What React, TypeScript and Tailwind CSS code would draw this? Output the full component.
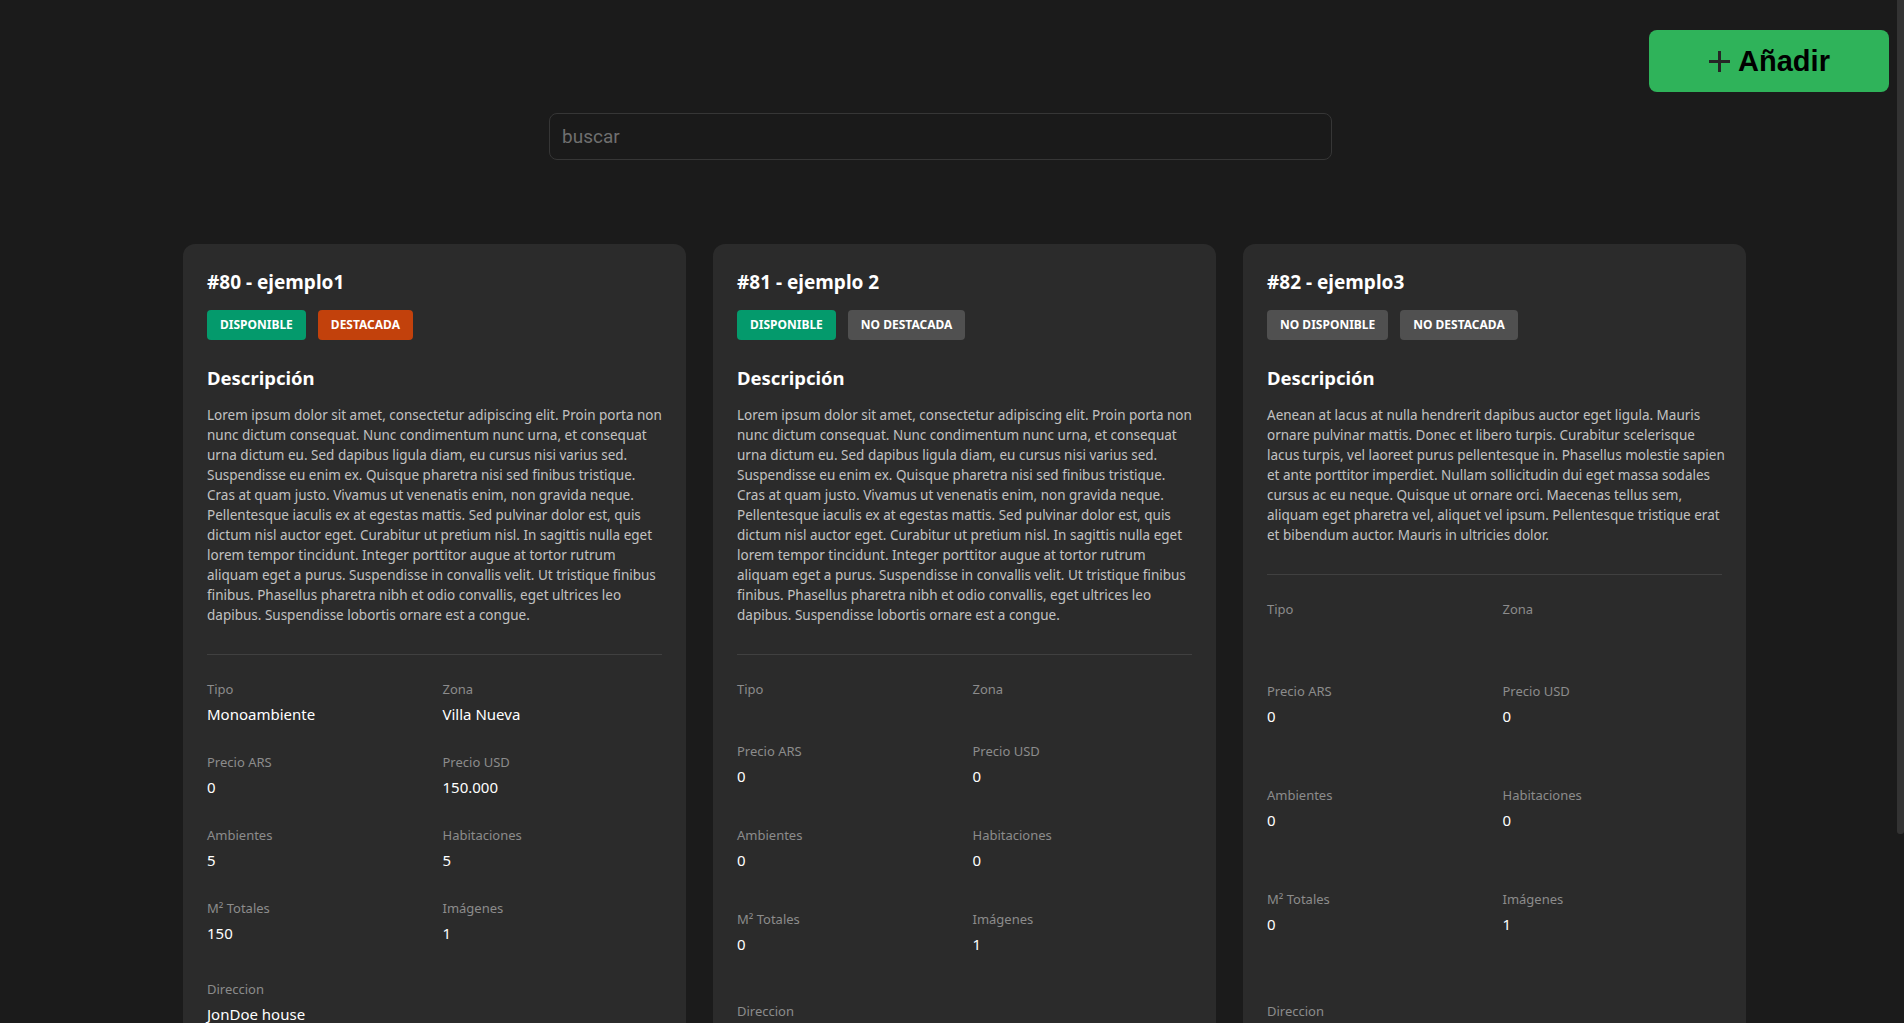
import React from "react";

type Field = { label: string; value: string };

type Propiedad = {
    id: number;
    nombre: string;
    disponible: boolean;
    destacada: boolean;
    descripcion: string[];
    campos: Field[];
    direccion: string;
};

const loremA = [
    "Lorem ipsum dolor sit amet, consectetur adipiscing elit. Proin porta non",
    "nunc dictum consequat. Nunc condimentum nunc urna, et consequat",
    "urna dictum eu. Sed dapibus ligula diam, eu cursus nisi varius sed.",
    "Suspendisse eu enim ex. Quisque pharetra nisi sed finibus tristique.",
    "Cras at quam justo. Vivamus ut venenatis enim, non gravida neque.",
    "Pellentesque iaculis ex at egestas mattis. Sed pulvinar dolor est, quis",
    "dictum nisl auctor eget. Curabitur ut pretium nisl. In sagittis nulla eget",
    "lorem tempor tincidunt. Integer porttitor augue at tortor rutrum",
    "aliquam eget a purus. Suspendisse in convallis velit. Ut tristique finibus",
    "finibus. Phasellus pharetra nibh et odio convallis, eget ultrices leo",
    "dapibus. Suspendisse lobortis ornare est a congue.",
];

const loremB = [
    "Aenean at lacus at nulla hendrerit dapibus auctor eget ligula. Mauris",
    "ornare pulvinar mattis. Donec et libero turpis. Curabitur scelerisque",
    "lacus turpis, vel laoreet purus pellentesque in. Phasellus molestie sapien",
    "et ante porttitor imperdiet. Nullam sollicitudin dui eget massa sodales",
    "cursus ac eu neque. Quisque ut ornare orci. Maecenas tellus sem,",
    "aliquam eget pharetra vel, aliquet vel ipsum. Pellentesque tristique erat",
    "et bibendum auctor. Mauris in ultricies dolor.",
];

const campos = (tipo: string, zona: string, ars: string, usd: string, amb: string, hab: string, m2: string, img: string): Field[] => [
    { label: "Tipo", value: tipo },
    { label: "Zona", value: zona },
    { label: "Precio ARS", value: ars },
    { label: "Precio USD", value: usd },
    { label: "Ambientes", value: amb },
    { label: "Habitaciones", value: hab },
    { label: "M² Totales", value: m2 },
    { label: "Imágenes", value: img },
];

const propiedades: Propiedad[] = [
    {
        id: 80,
        nombre: "ejemplo1",
        disponible: true,
        destacada: true,
        descripcion: loremA,
        campos: campos("Monoambiente", "Villa Nueva", "0", "150.000", "5", "5", "150", "1"),
        direccion: "JonDoe house",
    },
    {
        id: 81,
        nombre: "ejemplo 2",
        disponible: true,
        destacada: false,
        descripcion: loremA,
        campos: campos("", "", "0", "0", "0", "0", "0", "1"),
        direccion: "",
    },
    {
        id: 82,
        nombre: "ejemplo3",
        disponible: false,
        destacada: false,
        descripcion: loremB,
        campos: campos("", "", "0", "0", "0", "0", "0", "1"),
        direccion: "",
    },
];

function Badge({ children, color }: { children: React.ReactNode; color: "green" | "orange" | "gray" }) {
    const bg = color === "green" ? "bg-[#049a6c]" : color === "orange" ? "bg-[#c2410c]" : "bg-[#505050]";
    return (
        <span className={`${bg} h-[30px] px-[13px] rounded-[4px] flex items-center text-[12px] font-bold text-white uppercase`}>
            {children}
        </span>
    );
}

function Dato({ label, value }: Field) {
    return (
        <div>
            <div className="text-[13px] leading-5 text-[#8c8c8c]">{label}</div>
            <div className="mt-[4px] text-[15px] leading-[22px] text-white">{value}</div>
        </div>
    );
}

function Card({ p }: { p: Propiedad }) {
    return (
        <div className="bg-[#2b2b2b] rounded-xl p-6 flex flex-col">
            <h2 className="text-[19px] leading-7 font-bold text-white">#{p.id} - {p.nombre}</h2>
            <div className="mt-[14px] flex gap-3">
                <Badge color={p.disponible ? "green" : "gray"}>{p.disponible ? "Disponible" : "No disponible"}</Badge>
                <Badge color={p.destacada ? "orange" : "gray"}>{p.destacada ? "Destacada" : "No destacada"}</Badge>
            </div>

            <h3 className="mt-6 text-[18.5px] leading-7 font-bold text-white">Descripción</h3>
            <p className="mt-[13px] text-[13.5px] leading-5 text-[#c2c2c2] whitespace-nowrap">
                {p.descripcion.map((l, i) => (
                    <React.Fragment key={i}>
                        {l}
                        {i < p.descripcion.length - 1 && <br />}
                    </React.Fragment>
                ))}
            </p>

            <hr className="mt-[29px] border-0 border-t border-[#404040]" />

            <div className="mt-6 flex-1 grid grid-cols-2 gap-x-4 gap-y-[27px]">
                {p.campos.map((c) => (
                    <Dato key={c.label} label={c.label} value={c.value} />
                ))}
            </div>

            <div className="mt-[35px]">
                <Dato label="Direccion" value={p.direccion} />
            </div>
        </div>
    );
}

export default function App() {
    return (
        <div className="h-screen flex bg-[#1b1b1b] overflow-hidden" style={{ fontFamily: "'Noto Sans', sans-serif" }}>
            <div className="flex-1 min-w-0 pb-[203px]">
                <header className="flex justify-end pt-[30px] pr-[8px]">
                    <button className="w-[240px] h-[62px] rounded-lg bg-[#2fb35a] flex items-center justify-center gap-[7px] text-black">
                        <svg width="23" height="23" viewBox="0 0 23 23" className="text-[#262626]">
                            <path d="M11.5 1v21M1 11.5h21" stroke="currentColor" strokeWidth="3" fill="none" />
                        </svg>
                        <span className="text-[29px] font-bold leading-none" style={{ fontFamily: "'Liberation Sans', Arial, sans-serif" }}>
                            Añadir
                        </span>
                    </button>
                </header>

                <div className="mt-[21px] ml-[549px] w-[783px]">
                    <input
                        type="text"
                        placeholder="buscar"
                        className="w-full h-[47px] rounded-lg border border-[#363636] bg-[#1a1a1a] px-3 text-[19px] text-white placeholder:text-[#6f6f6f] outline-none"
                        style={{ fontFamily: "Roboto, sans-serif" }}
                    />
                </div>

                <main className="mt-[84px] ml-[183px] w-[1563px] grid grid-cols-3 gap-[27px]">
                    {propiedades.map((p) => (
                        <Card key={p.id} p={p} />
                    ))}
                </main>
            </div>

            {/* scrollbar */}
            <div className="w-[7px] shrink-0 bg-[#1b1b1b]">
                <div className="h-[834px] bg-[#333333] rounded-b-[3px]"></div>
            </div>
        </div>
    );
}
